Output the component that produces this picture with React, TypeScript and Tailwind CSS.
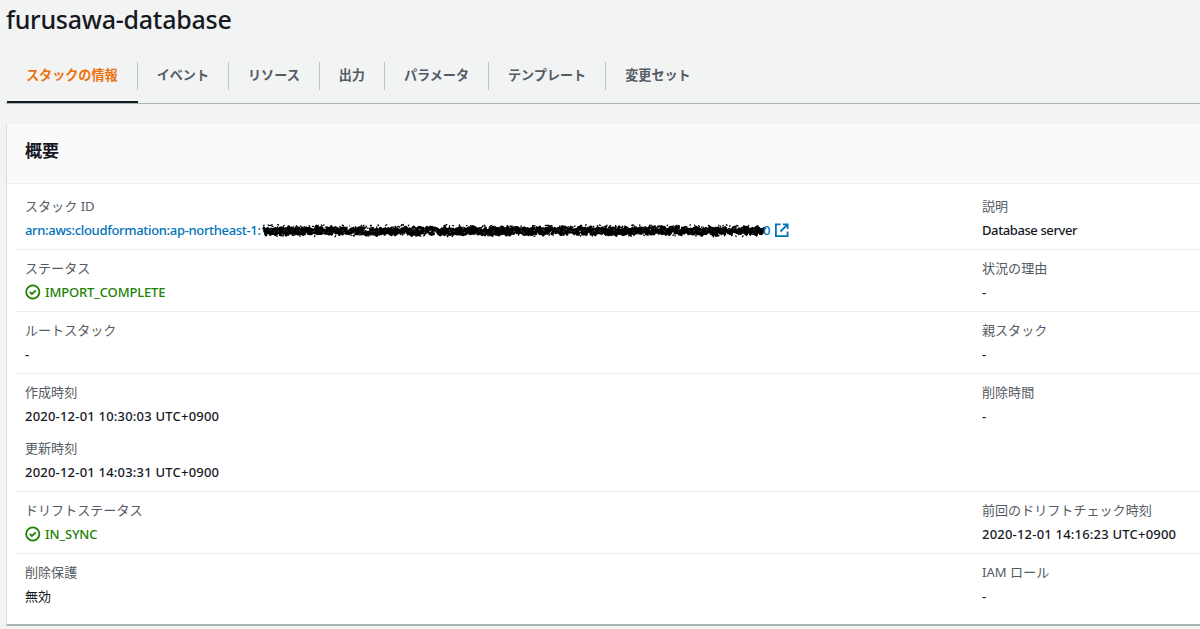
import * as React from "react";

// ─── Types ──────────────────────────────────────────────────

interface Field {
  label: string;
  value: React.ReactNode;
}

interface Row {
  left: Field[];
  right: Field[];
}

// ─── Icons ──────────────────────────────────────────────────

function CheckCircleIcon() {
  return (
    <svg viewBox="0 0 16 16" className="size-4 shrink-0" fill="none" stroke="#1d8102" strokeWidth="1.8">
      <circle cx="7.8" cy="8" r="6.6" />
      <path d="M4.7 7.9l2.2 2.1 3.9-3.7" />
    </svg>
  );
}

function ExternalIcon() {
  return (
    <svg viewBox="0 0 16 16" className="size-4 shrink-0" fill="none" stroke="#0073bb" strokeWidth="1.8">
      <path d="M6.5 2.4H1.9v11.7h11.7V9.5" />
      <path d="M8.9 2.4h4.7v4.7M13.3 2.7L6.5 9.5" />
    </svg>
  );
}

// ─── Redacted account / stack id ────────────────────────────

const SCRIBBLE_WIDTH = 506;

function buildScribble(seed: number, count: number, top: number, spread: number, length: number) {
  let s = seed;
  const rand = () => {
    s = (s * 16807) % 2147483647;
    return s / 2147483647;
  };
  let d = "";
  for (let i = 0; i < count; i++) {
    const x = 2 + (i / count) * (SCRIBBLE_WIDTH - 6);
    const y = top + rand() * spread;
    const dx = (rand() - 0.4) * length;
    const dy = (rand() - 0.5) * length;
    d += `M${x.toFixed(1)} ${y.toFixed(1)}l${dx.toFixed(1)} ${dy.toFixed(1)}`;
  }
  return d;
}

const core = buildScribble(71, 1100, 6, 6, 3.5);
const edge = buildScribble(913, 620, 3, 11, 2);
const specks = buildScribble(4421, 70, 4, 6, 2);
const glints = buildScribble(307, 50, 4, 9, 1);

function Redaction() {
  return (
    <svg width="506" height="16" viewBox="0 0 506 16" className="shrink-0" fill="none" strokeLinecap="round">
      <path d={edge} stroke="#000" strokeWidth="1.3" />
      <path d={core} stroke="#000" strokeWidth="2.8" />
      <path d={specks} stroke="#1c75b0" strokeWidth="0.6" />
      <path d={glints} stroke="#a8a8a8" strokeWidth="0.6" />
    </svg>
  );
}

function StackId() {
  return (
    <a className="flex h-5 items-center font-medium text-[#0073bb]">
      <span className="w-[237px] tracking-[-0.33px] whitespace-nowrap">arn:aws:cloudformation:ap-northeast-1:</span>
      <Redaction />
      <span className="-ml-[5px] w-[11px]">0</span>
      <ExternalIcon />
    </a>
  );
}

function Status({ children }: { children: React.ReactNode }) {
  return (
    <span className="flex h-5 items-center gap-1 tracking-[-0.15px] text-[#1d8102]">
      <CheckCircleIcon />
      {children}
    </span>
  );
}

function Timestamp({ children }: { children: React.ReactNode }) {
  return <span className="tracking-[0.21px]">{children}</span>;
}

// ─── Data ───────────────────────────────────────────────────

const tabs = ["スタックの情報", "イベント", "リソース", "出力", "パラメータ", "テンプレート", "変更セット"];

const rows: Row[] = [
  {
    left: [{ label: "スタック ID", value: <StackId /> }],
    right: [{ label: "説明", value: <span className="tracking-[-0.4px]">Database server</span> }],
  },
  {
    left: [{ label: "ステータス", value: <Status>IMPORT_COMPLETE</Status> }],
    right: [{ label: "状況の理由", value: "-" }],
  },
  {
    left: [{ label: "ルートスタック", value: "-" }],
    right: [{ label: "親スタック", value: "-" }],
  },
  {
    left: [
      { label: "作成時刻", value: <Timestamp>2020-12-01 10:30:03 UTC+0900</Timestamp> },
      { label: "更新時刻", value: <Timestamp>2020-12-01 14:03:31 UTC+0900</Timestamp> },
    ],
    right: [{ label: "削除時間", value: "-" }],
  },
  {
    left: [{ label: "ドリフトステータス", value: <Status>IN_SYNC</Status> }],
    right: [{ label: "前回のドリフトチェック時刻", value: <Timestamp>2020-12-01 14:16:23 UTC+0900</Timestamp> }],
  },
  {
    left: [{ label: "削除保護", value: <span className="font-normal">無効</span> }],
    right: [{ label: "IAM ロール", value: "-" }],
  },
];

function FieldList({ fields }: { fields: Field[] }) {
  return (
    <dl className="flex flex-col gap-3">
      {fields.map((f) => (
        <div key={f.label} className="flex flex-col gap-1">
          <dt className="h-5 text-[13.07px] text-[#545b64]">{f.label}</dt>
          <dd className="h-5 font-medium text-[#16191f]">{f.value}</dd>
        </div>
      ))}
    </dl>
  );
}

// ─── Page ───────────────────────────────────────────────────

export default function App() {
  return (
    <div className="h-[629px] w-[1200px] overflow-hidden bg-[#f2f3f3] font-['Noto_Sans','Noto_Sans_CJK_JP',sans-serif] text-[13px] leading-5 text-[#16191f]">
      <h1 className="h-[62px] pt-[3px] pl-[6px] text-[25px] leading-8 font-medium tracking-[-0.25px]">
        furusawa-database
      </h1>

      {/* Tabs */}
      <nav className="ml-[6px] flex h-[42px] border-b border-[#aab7b8] pl-px">
        {tabs.map((tab, i) => (
          <div
            key={tab}
            className={`h-[41px] text-[13.1px] font-bold ${
              i === 0 ? "border-b-2 border-[#16191f] text-[#ec7211]" : "text-[#545b64]"
            }`}
          >
            <div
              className={`h-7 px-[19px] leading-[27px] whitespace-nowrap ${
                i < tabs.length - 1 ? "border-r border-[#b9c4c5]" : ""
              }`}
            >
              {tab}
            </div>
          </div>
        ))}
      </nav>

      {/* Overview */}
      <section className="mt-5 ml-[6px] h-[502px] border-b-2 border-l border-b-[#aab7b8] border-l-[#d9dedf] bg-white">
        <header className="h-[60px] border-b border-[#eaeded] bg-[#fafafa] pl-[18px]">
          <h2 className="pt-[14px] text-[17px] leading-[26px] font-bold">概要</h2>
        </header>
        <div className="pt-1 pl-[9px]">
          {rows.map((row, i) => (
            <div
              key={i}
              className={`grid grid-cols-[957px_1fr] pt-2 pb-[9px] pl-[9px] ${
                i > 0 ? "border-t border-[#eaeded]" : ""
              }`}
            >
              <FieldList fields={row.left} />
              <FieldList fields={row.right} />
            </div>
          ))}
        </div>
      </section>
    </div>
  );
}
